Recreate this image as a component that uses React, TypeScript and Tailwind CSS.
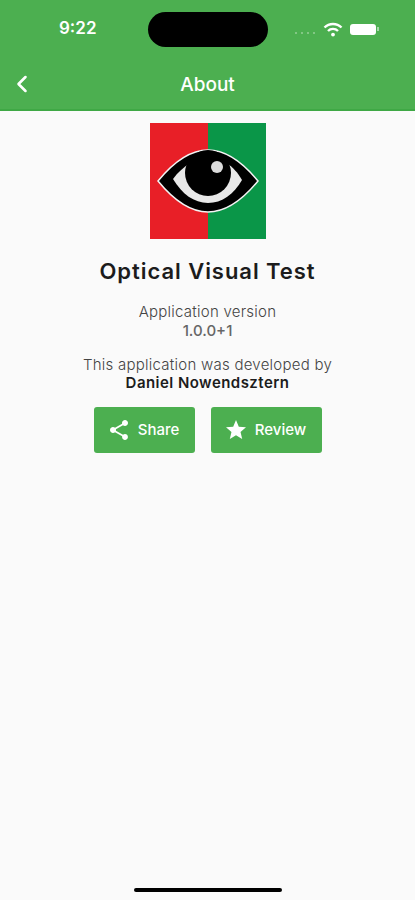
import { FC } from 'react';
import { ChevronLeft } from 'lucide-react';

const ShareIcon: FC = () => (
  <svg width="24" height="24" viewBox="0 0 24 24" fill="white">
    <path d="M18 16.08c-.76 0-1.44.3-1.96.77L8.91 12.7c.05-.23.09-.46.09-.7s-.04-.47-.09-.7l7.05-4.11c.54.5 1.25.81 2.04.81 1.66 0 3-1.34 3-3s-1.34-3-3-3-3 1.34-3 3c0 .24.04.47.09.7L8.04 9.81C7.5 9.31 6.79 9 6 9c-1.66 0-3 1.34-3 3s1.34 3 3 3c.79 0 1.5-.31 2.04-.81l7.12 4.16c-.05.21-.08.43-.08.65 0 1.61 1.31 2.92 2.92 2.92s2.92-1.31 2.92-2.92-1.31-2.92-2.92-2.92z" />
  </svg>
);

const StarIcon: FC = () => (
  <svg width="24" height="24" viewBox="0 0 24 24" fill="white">
    <path d="M12 17.27 18.18 21l-1.64-7.03L22 9.24l-7.19-.61L12 2 9.19 8.63 2 9.24l5.46 4.73L5.82 21z" />
  </svg>
);

const WifiIcon: FC = () => (
  <svg width="20" height="15" viewBox="0 0 20 15" fill="none" stroke="white" strokeWidth="2.4">
    <path d="M1.5 5.5 A12 12 0 0 1 18.5 5.5" />
    <path d="M5 9 A7 7 0 0 1 15 9" />
    <circle cx="10" cy="12.6" r="1.9" fill="white" stroke="none" />
  </svg>
);

const EyeLogo: FC = () => (
  <div className="relative flex h-[116px] w-[116px]">
    <div className="h-full w-[58px] bg-[#e81f27]" />
    <div className="h-full w-[58px] bg-[#0a9648]" />
    <svg className="absolute inset-0" width="116" height="116" viewBox="0 0 116 116">
      <path d="M8 58 C26 36 42 27 58 27 C74 27 90 36 108 58 C90 80 74 89 58 89 C42 89 26 80 8 58 Z" fill="black" stroke="#f4f4f4" strokeWidth="1.5" />
      <path d="M23 56 C28 49 34 44 40 40 L76 40 C83 44 88 50 92 57 C84 71 72 80 58 80 C44 80 32 71 23 56 Z" fill="#e8e8e8" />
      <circle cx="58" cy="50" r="23" fill="black" />
      <circle cx="67" cy="44" r="6" fill="#dcdcdc" />
    </svg>
  </div>
);

const ActionButton: FC<{ label: string; width: string; icon: React.ReactNode }> = ({ label, width, icon }) => (
  <button className={`flex h-[46px] items-center justify-center gap-[7px] rounded-[3px] bg-[#4caf50] pr-[2px] text-[15px] font-medium text-white ${width}`}>
    {icon}
    <span>{label}</span>
  </button>
);

export default function App() {
  return (
    <div className="relative flex h-[900px] w-[415px] flex-col overflow-hidden bg-[#fafafa] font-['Inter',sans-serif]">
      <header className="h-[111px] flex-none border-b-2 border-[#3fa845] bg-[#4caf50]">
        <div className="flex h-[58px] items-center pl-[59px] pr-[36px]">
          <span className="text-[17px] font-semibold text-white">9:22</span>
          <div className="ml-[52px] h-[35px] w-[120px] rounded-full bg-black" />
          <div className="ml-auto flex items-center gap-[7px]">
            <div className="mt-[8px] mr-[1px] flex gap-[4px]">
              <div className="h-[2px] w-[2px] bg-white/30" />
              <div className="h-[2px] w-[2px] bg-white/30" />
              <div className="h-[2px] w-[2px] bg-white/30" />
              <div className="h-[2px] w-[2px] bg-white/30" />
            </div>
            <WifiIcon />
            <div className="flex items-center">
              <div className="h-[11px] w-[26px] rounded-[3px] bg-white" />
              <div className="ml-[1px] h-[4px] w-[2px] bg-white/50" />
            </div>
          </div>
        </div>
        <div className="relative flex h-[51px] items-center justify-center pt-[3px]">
          <ChevronLeft className="absolute left-[8px] top-[12px] text-white" size={28} strokeWidth={2.2} />
          <h1 className="text-[19px] font-medium text-white">About</h1>
        </div>
      </header>
      <main className="flex flex-col items-center pt-[12px]">
        <EyeLogo />
        <h2 className="mt-[17px] text-[22px] leading-[30px] font-semibold tracking-[0.95px] text-[#1c1c1c]">Optical Visual Test</h2>
        <p className="mt-[16px] text-[15px] leading-[19px] font-light tracking-[0.25px] text-[#444]">Application version</p>
        <p className="text-[15px] leading-[19px] font-medium text-[#666]">1.0.0+1</p>
        <p className="mt-[16px] text-[15px] leading-[18px] font-light tracking-[0.25px] text-[#444]">This application was developed by</p>
        <p className="text-[15px] leading-[18px] font-semibold tracking-[0.45px] text-[#1c1c1c]">Daniel Nowendsztern</p>
        <div className="mt-[15px] flex gap-[16px]">
          <ActionButton label="Share" width="w-[101px]" icon={<ShareIcon />} />
          <ActionButton label="Review" width="w-[111px]" icon={<StarIcon />} />
        </div>
      </main>
      <div className="absolute bottom-[8px] left-[134px] h-[4px] w-[148px] rounded-full bg-black" />
    </div>
  );
}
